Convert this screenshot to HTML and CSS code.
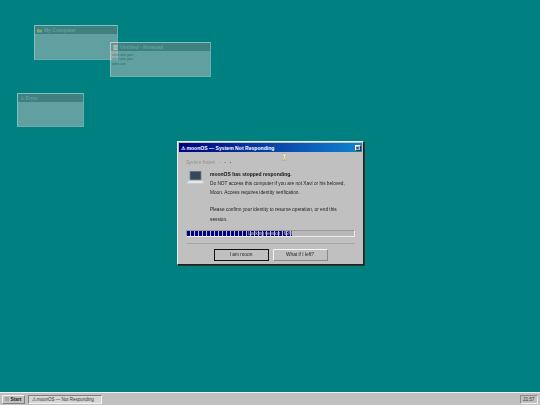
FILE: index.html
```html
<!DOCTYPE html>
<html lang="en">
<head>
<meta charset="utf-8">
<title>moonOS</title>
<link rel="stylesheet" href="styles.css">
</head>
<body>
<div class="screen">
  <main class="desktop">
    <section class="ghost ghost-computer">
      <header class="ghost-title">
        <svg class="ghost-icon" viewBox="0 0 10 10"><path d="M0 2h4l1 1h5v6H0z" fill="#e6d35a"/></svg>
        <span>My Computer</span>
      </header>
    </section>
    <section class="ghost ghost-notepad">
      <header class="ghost-title">
        <svg class="ghost-icon" viewBox="0 0 10 10"><path d="M1 0h8v10H1z" fill="#f4f0dc"/><path d="M2 3h6M2 5h6M2 7h6" stroke="#c9a94a" stroke-width="1"/></svg>
        <span>Untitled - Notepad</span>
      </header>
      <div class="ghost-note">who are you<br>who are you<br>who are</div>
    </section>
    <section class="ghost ghost-error">
      <header class="ghost-title">
        <span>⚠ Error</span>
      </header>
    </section>

    <section class="dialog">
      <header class="dialog-title">
        <span class="dialog-name">⚠ moonOS — System Not Responding</span>
        <span class="close">×</span>
      </header>
      <div class="dialog-body">
        <div class="status-row">
          <span class="frozen">System frozen</span>
          <span class="dots"><i class="dot"></i><i class="dot"></i><i class="dot dot-on"></i></span>
          <svg class="hourglass" viewBox="0 0 10 16">
            <path d="M1 .5h8M1 15.500h8" stroke="#8a8a80" stroke-width="1.2"/>
            <path d="M2 1.500h6L5.600 8 8 14.500H2L4.400 8z" fill="#e9e3c8"/>
            <path d="M2.200 14.500h5.600L5 10z" fill="#e0b43c"/>
          </svg>
        </div>
        <div class="message">
          <svg class="laptop" viewBox="0 0 32 30">
            <rect x="5" y="2" width="22" height="17" rx="1" fill="#6b7781"/>
            <rect x="6.500" y="3.500" width="19" height="14" fill="#34495c"/>
            <path d="M3 20h26l3 5.500H0z" fill="#e2e9ef"/>
            <path d="M0 25.500h32V27H0z" fill="#b4c0cb"/>
          </svg>
          <div class="copy">
            <p class="headline">moonOS has stopped responding.</p>
            <p>Do NOT access this computer if you are not Xavi or his beloved, Moon. Access requires identity verification.</p>
            <p class="gap">Please confirm your identity to resume operation, or end this session.</p>
          </div>
        </div>
        <div class="progress">
          <div class="progress-fill"></div>
          <span class="progress-label">Locking session | 63%</span>
        </div>
        <div class="actions">
          <button class="btn btn-default">I am moon</button>
          <button class="btn">What if I left?</button>
        </div>
      </div>
    </section>
  </main>
  <footer class="taskbar">
    <button class="start"><span class="start-logo"></span>Start</button>
    <div class="task">⚠ moonOS — Not Responding</div>
    <div class="clock">21:57</div>
  </footer>
</div>
</body>
</html>
```
FILE: styles.css
```css
* { box-sizing: border-box; }
html, body { margin: 0; height: 100%; }
body { overflow: hidden; background: #008080; font-family: "Liberation Sans", Arial, sans-serif; color: #111; }
.screen { width: 540px; height: 405px; display: flex; flex-direction: column; filter: blur(0.4px); }
.desktop { position: relative; flex: 1; }

.ghost { position: absolute; background: #c0c0c0; opacity: .5; border: 1px solid #fff; border-right-color: #d8d8d8; border-bottom-color: #d8d8d8; }
.ghost-computer { left: 34px; top: 25px; width: 84px; height: 35px; }
.ghost-notepad { left: 110px; top: 42px; width: 101px; height: 35px; }
.ghost-error { left: 17px; top: 93px; width: 67px; height: 34px; }
.ghost-title { height: 8px; background: #808080; color: #bcbcbc; font-size: 5px; font-weight: bold; display: flex; align-items: center; gap: 2px; padding-left: 2px; white-space: nowrap; }
.ghost-icon { width: 5px; height: 5px; }
.ghost-note { font-size: 3.900px; line-height: 4.300px; padding: 2px 1px; color: #555; }

.dialog { position: absolute; left: 177px; top: 141px; width: 187px; height: 124px; background: #c0c0c0; border: 1px solid; border-color: #eee #222 #222 #eee; box-shadow: 1px 1px 0 #333; padding: 1px; display: flex; flex-direction: column; }
.dialog-title { height: 9px; flex: none; background: linear-gradient(90deg, #000080, #1084d0); color: #fff; display: flex; align-items: center; justify-content: space-between; padding: 0 1.500px 0 2px; font-size: 5.100px; font-weight: bold; white-space: nowrap; }
.close { width: 6px; height: 6px; background: #c0c0c0; color: #222; font-size: 6px; line-height: 5px; text-align: center; border: .5px solid; border-color: #fff #333 #333 #fff; }
.dialog-body { flex: 1; padding: 0 7px; display: flex; flex-direction: column; }

.status-row { height: 17px; position: relative; display: flex; align-items: center; gap: 2.500px; padding-top: 4px; flex: none; font-size: 4.600px; }
.frozen { color: #8f8f8f; font-style: italic; }
.dots { display: flex; gap: 4px; margin-left: 1px; }
.dot { width: 1.500px; height: 1.500px; border-radius: 50%; background: #999; }
.dot-on { background: #444; }
.hourglass { position: absolute; left: 96px; top: 1px; width: 5px; height: 8px; }

.message { display: flex; gap: 6px; padding-left: 1px; flex: none; }
.laptop { width: 17px; height: 16px; flex: none; margin-top: 1px; }
.copy { font-size: 4.750px; line-height: 9.400px; width: 146px; color: #222; padding-top: .5px; }
.copy p { margin: 0; }
.copy .gap { margin-top: 7.500px; }
.copy .headline { font-size: 5px; font-weight: bold; color: #111; }

.progress { position: relative; height: 7px; margin-top: 5.500px; flex: none; background: #b8b8b8; border: 1px solid; border-color: #9a9a9a #ececec #ececec #9a9a9a; }
.progress-fill { width: 63%; height: 100%; background: repeating-linear-gradient(90deg, #000080 0 3px, #c0c0c0 3px 4px); }
.progress-label { position: absolute; inset: 0; display: flex; align-items: center; justify-content: center; font-size: 4.500px; color: #ccc; }

.actions { margin-top: 6px; padding-top: 5px; border-top: 1px solid #a8a8a8; display: flex; justify-content: center; gap: 4px; flex: none; }
.btn { width: 55px; height: 12px; padding: 0; font: 4.800px "Liberation Sans", Arial, sans-serif; color: #222; background: #c0c0c0; border: 1px solid; border-color: #f4f4f4 #8a8a8a #8a8a8a #f4f4f4; }
.btn-default { border-color: #111; }

.taskbar { height: 13px; flex: none; background: #c0c0c0; border-top: 1px solid #eee; display: flex; align-items: center; gap: 2.500px; padding: 0 2px; font-size: 4.500px; }
.start { width: 23px; height: 9px; padding: 0 0 0 2px; display: flex; align-items: center; gap: 1.500px; font: bold 4.800px "Liberation Sans", Arial, sans-serif; color: #222; background: #c0c0c0; border: 1px solid; border-color: #f0f0f0 #808080 #808080 #f0f0f0; }
.start-logo { width: 4px; height: 4px; background: #a5a5a5; }
.task { width: 74px; height: 9px; padding-left: 3px; display: flex; align-items: center; white-space: nowrap; background: #d6d6d6; color: #333; border: 1px solid; border-color: #808080 #f0f0f0 #f0f0f0 #808080; }
.clock { margin-left: auto; width: 18px; height: 9px; display: flex; align-items: center; justify-content: center; background: #c0c0c0; color: #333; border: 1px solid; border-color: #8a8a8a #eee #eee #8a8a8a; }
```
